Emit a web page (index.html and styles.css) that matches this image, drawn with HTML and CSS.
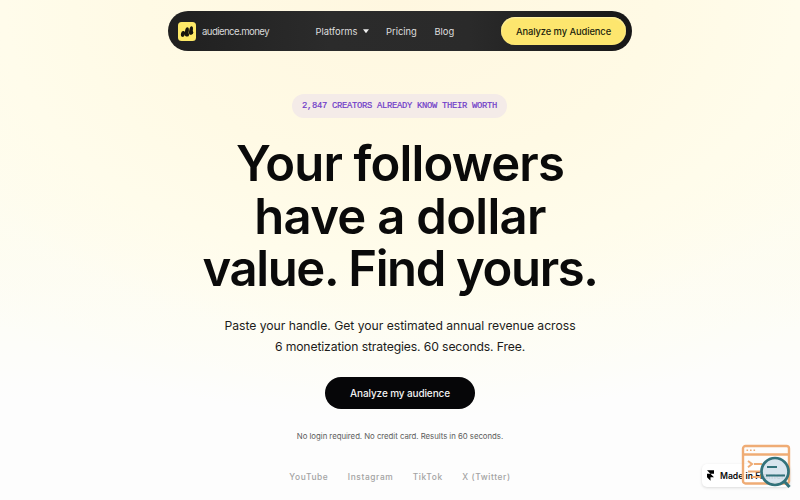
FILE: index.html
```html
<!DOCTYPE html>
<html lang="en">
<head>
  <meta charset="UTF-8">
  <meta name="viewport" content="width=device-width, initial-scale=1.0">
  <title>audience.money</title>
  <link rel="stylesheet" href="styles.css">
</head>
<body>
  <header class="navbar">
    <a class="brand">
      <svg class="brand-icon" viewBox="0 0 18 19">
        <rect width="18" height="19" rx="3.5" fill="#fde968"/>
        <g fill="#17150c">
          <ellipse cx="5" cy="11.8" rx="2" ry="2.9" transform="rotate(14 5 11.8)"/>
          <ellipse cx="8.8" cy="9.8" rx="1.9" ry="4.5" transform="rotate(10 8.8 9.8)"/>
          <ellipse cx="13" cy="8.6" rx="1.8" ry="4.3" transform="rotate(10 13 8.6)"/>
          <circle cx="4.6" cy="13" r="1.7"/>
          <circle cx="9.2" cy="12.7" r="1.9"/>
          <circle cx="13.4" cy="10.5" r="1.9"/>
        </g>
      </svg>
      <span class="brand-name">audience.money</span>
    </a>
    <nav class="nav-links">
      <a class="link-platforms">Platforms
        <svg class="caret" viewBox="0 0 6 4"><path d="M0 0.200h6L3.400 3.700q-.4.400-.8 0z" fill="#eee"/></svg>
      </a>
      <a class="link-pricing">Pricing</a>
      <a class="link-blog">Blog</a>
    </nav>
    <a class="nav-btn"><span>Analyze my Audience</span></a>
  </header>

  <main class="hero">
    <div class="badge">2,847 CREATORS ALREADY KNOW THEIR WORTH</div>
    <h1>
      <span class="line-1">Your followers</span>
      <span class="line-2">have a dollar</span>
      <span class="line-3">value. Find yours.</span>
    </h1>
    <p class="subtitle">
      <span class="sub-1">Paste your handle. Get your estimated annual revenue across</span>
      <span class="sub-2">6 monetization strategies. 60 seconds. Free.</span>
    </p>
    <a class="cta">Analyze my audience</a>
    <p class="note">No login required. No credit card. Results in 60 seconds.</p>
    <div class="platforms">
      <span>YouTube</span>
      <span>Instagram</span>
      <span>TikTok</span>
      <span>X (Twitter)</span>
    </div>
  </main>

  <div class="framer-badge">
    <svg class="framer-icon" viewBox="0 0 8 12"><path d="M0 0h8v4H4zM0 4h4l4 4H0zM0 8h4v4z" fill="#000"/></svg>
    <span>Made in Framer</span>
  </div>

  <svg class="inspect-icon" viewBox="0 0 50 44">
    <g fill="none" stroke="#efac75" stroke-width="2.4">
      <rect x="2" y="2" width="46" height="37.5" rx="2.5"/>
      <path d="M2 10.5h46"/>
      <path d="M5.5 6.2h1.6M9 6.2h1.6M12.5 6.2h1.6" stroke-width="1.4"/>
      <path d="M7 17l4 3-4 3.2M13 20h8M7 27.5h14M11 33h8" stroke-width="2"/>
    </g>
    <circle cx="34" cy="27.5" r="13.5" fill="#d5e3ed" fill-opacity=".92" stroke="#32727a" stroke-width="2.7"/>
    <path d="M43.500 37.500l5 5.500" stroke="#32727a" stroke-width="3"/>
    <path d="M26 23h10M25 31.500h19" stroke="#32727a" stroke-width="2"/>
  </svg>
</body>
</html>
```
FILE: styles.css
```css
* {
  margin: 0;
  padding: 0;
  box-sizing: border-box;
}
body {
  display: flex;
  flex-direction: column;
  align-items: center;
  height: 500px;
  padding-top: 11px;
  overflow: hidden;
  font-family: Inter, "Liberation Sans", sans-serif;
  color: #0a0a0a;
  background: radial-gradient(ellipse 640px 420px at 50% 0%, #fff7e0 0%, #fffae5 40%, #fffceb 62%, rgba(254, 253, 242, 0.6) 82%, rgba(253, 253, 253, 0) 100%),
    linear-gradient(180deg, #fffae2 0%, #fefcec 40%, #fdfdf8 66%, #fdfdfd 80%);
}
.navbar {
  display: flex;
  flex: none;
  align-items: center;
  width: 464px;
  height: 40px;
  padding: 0 6px 0 10px;
  border-radius: 20px;
  background: linear-gradient(90deg, #202020, #2b2b2b 35%, #2a2a2a 65%, #171717);
}
.brand {
  display: flex;
  align-items: center;
  gap: 6px;
  width: 137px;
}
.brand-icon {
  width: 18px;
  height: 19px;
}
.brand-name {
  font-size: 9.6px;
  letter-spacing: -0.57px;
  color: #d8d8d8;
}
.nav-links {
  display: flex;
  gap: 17.5px;
  width: 186px;
  padding-left: 0.5px;
  font-size: 9.4px;
  color: #dedede;
}
.link-platforms {
  display: flex;
  align-items: center;
  gap: 5px;
}
.caret {
  width: 6px;
  height: 4px;
}
.nav-btn {
  display: flex;
  align-items: center;
  justify-content: center;
  width: 125px;
  height: 28px;
  border-radius: 14px;
  background: #fde66e;
  box-shadow: inset 0 1px 2px #fff4b2;
  font-size: 9.4px;
  font-weight: 500;
  letter-spacing: -0.1px;
  color: #211e0c;
}
.hero {
  display: flex;
  flex-direction: column;
  align-items: center;
  text-align: center;
}
.badge {
  width: 215px;
  height: 24px;
  margin: 43px 1px 0 0;
  border-radius: 12px;
  background: #f4ebe8;
  font-family: "Liberation Mono", monospace;
  font-size: 8.8px;
  line-height: 24px;
  letter-spacing: -0.28px;
  white-space: nowrap;
  color: #6f3bc8;
  -webkit-text-stroke: 0.2px #6f3bc8;
}
h1 {
  margin-top: 20px;
  font-size: 49px;
  font-weight: 600;
  line-height: 52.5px;
  letter-spacing: -1.5px;
  white-space: nowrap;
}
h1 span,
.subtitle span {
  display: block;
}
.line-1 {
  letter-spacing: -0.85px;
}
.line-2 {
  letter-spacing: -0.7px;
}
.line-3 {
  letter-spacing: -1.35px;
}
.subtitle {
  margin-top: 19px;
  font-size: 12.2px;
  line-height: 21.5px;
  letter-spacing: -0.03px;
  white-space: nowrap;
  color: #1c1c1a;
}
.sub-2 {
  letter-spacing: -0.13px;
}
.cta {
  width: 150px;
  height: 32px;
  margin-top: 19px;
  border-radius: 16px;
  background: #060608;
  font-size: 10px;
  font-weight: 500;
  line-height: 32px;
  letter-spacing: -0.12px;
  color: #f2f2f2;
}
.note {
  margin-top: 21px;
  font-size: 7.8px;
  line-height: 12px;
  letter-spacing: -0.03px;
  color: #5c5c5c;
}
.platforms {
  display: flex;
  gap: 19.5px;
  margin-top: 29px;
  font-size: 8.4px;
  font-weight: 500;
  line-height: 12px;
  letter-spacing: 0.6px;
  color: #a3a3a3;
}
/* floating items in the bottom right corner */
.framer-badge {
  position: absolute;
  right: 10px;
  bottom: 13px;
  display: flex;
  align-items: center;
  gap: 6px;
  width: 88px;
  height: 23px;
  padding-left: 5px;
  border-radius: 5px;
  background: #fff;
  box-shadow: 0 1px 3px rgba(0, 0, 0, 0.14);
  font-size: 8.6px;
  font-weight: 600;
  white-space: nowrap;
}
.framer-icon {
  width: 7px;
  height: 11px;
}
.inspect-icon {
  position: absolute;
  left: 741px;
  top: 444px;
  width: 50px;
  height: 44px;
}
```
